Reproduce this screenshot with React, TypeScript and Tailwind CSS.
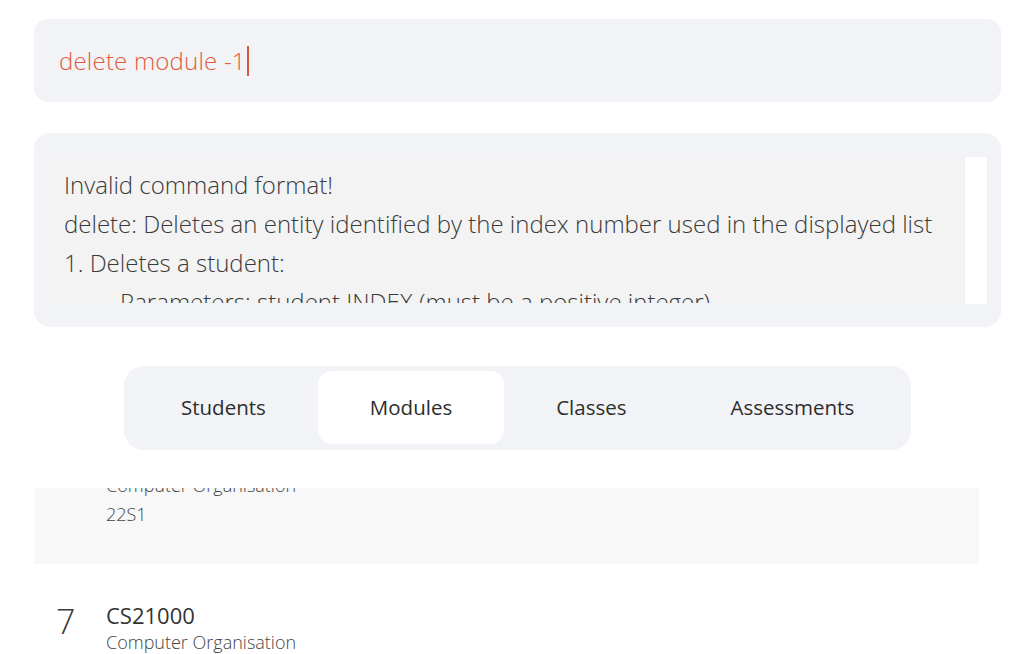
import React from 'react';

const TABS = ['Students', 'Modules', 'Classes', 'Assessments'];

const RESULT_LINES = [
  'Invalid command format!',
  'delete: Deletes an entity identified by the index number used in the displayed list',
  '1. Deletes a student:',
  '\u00a0\u00a0\u00a0\u00a0\u00a0\u00a0\u00a0\u00a0\u00a0Parameters: student INDEX (must be a positive integer)',
];

const MODULES = [
  { index: 6, code: 'CS21000', name: 'Computer Organisation', term: '22S1' },
  { index: 7, code: 'CS21000', name: 'Computer Organisation', term: '22S1' },
];

const font = { fontFamily: '"Open Sans", "Noto Sans", sans-serif' };

export default function App() {
  return (
    <div className="w-[1031px] h-[654px] overflow-hidden bg-white" style={font}>
      {/* Command box */}
      <div className="ml-[34px] mr-[30px] mt-[19px] h-[83px] rounded-[14px] bg-[#f2f3f7] flex items-center pl-[25px]">
        <span className="text-[24px] font-light text-[#e05a3c] leading-none tracking-[0.2px]">delete module -1</span>
        <span className="ml-[1px] w-[2px] h-[30px] bg-[#d9583d]" />
      </div>

      {/* Result box */}
      <div className="ml-[34px] mr-[30px] mt-[31px] h-[194px] rounded-[16px] bg-[#f2f3f7] pt-[24px] pb-[24px] pl-[16px] pr-[14px] flex">
        <div className="flex-1 h-[146px] overflow-hidden bg-[#f3f3f3] pl-[14px] pt-[8px]">
          {RESULT_LINES.map((line) => (
            <div key={line} className="text-[24px] leading-[39px] font-light text-[#3a3a3a] whitespace-pre">
              {line}
            </div>
          ))}
        </div>
        <div className="w-[22px] h-[147px] bg-white rounded-[2px]" />
      </div>

      {/* Tabs */}
      <div className="ml-[124px] mt-[39px] w-fit h-[84px] rounded-[20px] bg-[#f2f3f7] pt-[5px] pb-[6px] px-[5px] flex">
        {TABS.map((tab) => (
          <div
            key={tab}
            className={
              'px-[52px] flex items-center text-[20.5px] text-[#2d2d2d] rounded-[14px] ' +
              (tab === 'Modules' ? 'bg-white' : '')
            }
          >
            {tab}
          </div>
        ))}
      </div>

      {/* Module list, scrolled */}
      <div className="ml-[34px] mt-[38px] h-[166px] overflow-hidden">
        <div className="-mt-[81px]">
          {MODULES.map((m, i) => (
            <div
              key={m.index}
              className={'w-[945px] flex pt-[38px] pb-[35px] pl-[22px] ' + (i % 2 === 0 ? 'bg-[#f8f8f8]' : 'bg-white')}
            >
              <div className="w-[50px] text-[34px] font-light leading-[40px] text-[#3a3a3a] mt-[-1px]">{m.index}</div>
              <div className="flex flex-col">
                <div className="text-[22px] leading-[26px] text-[#333]">{m.code}</div>
                <div className="text-[18px] leading-[29px] font-light text-[#444]">{m.name}</div>
                <div className="text-[18px] leading-[29px] font-light text-[#444]">{m.term}</div>
              </div>
            </div>
          ))}
        </div>
      </div>
    </div>
  );
}
